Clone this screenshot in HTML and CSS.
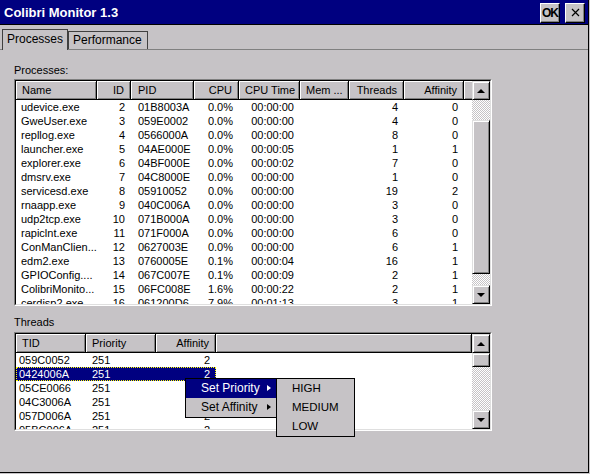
FILE: index.html
```html
<!DOCTYPE html>
<html>
	<head>
		<meta charset="UTF-8">
		<title>Colibri Monitor 1.3</title>
		<link rel="stylesheet" href="styles.css">
	</head>
	<body>
		<div class="window">
			<div class="titlebar">
				<span class="title">Colibri Monitor 1.3</span>
				<div class="tb_buttons">
					<span class="tb_btn">OK</span>
					<span class="tb_btn">
						<svg width="9" height="9" viewBox="0 0 9 9"><path d="M1 1L8 8M8 1L1 8" stroke="#000" stroke-width="1.2" fill="none"/></svg>
					</span>
				</div>
			</div>

			<div class="tabs">
				<div class="tab active">Processes</div>
				<div class="tab">Performance</div>
			</div>

			<div class="page">
				<div class="label">Processes:</div>
				<div class="lv proc">
					<div class="lv_in">
						<div class="lv_main">
							<div class="hd cols">
								<span>Name</span>
								<span class="r">ID</span>
								<span class="pid">PID</span>
								<span class="r">CPU</span>
								<span class="r">CPU Time</span>
								<span class="r">Mem ...</span>
								<span class="r">Threads</span>
								<span class="r">Affinity</span>
								<span></span>
							</div>
							<div class="row cols"><span>udevice.exe</span><span class="r">2</span><span class="pid">01B8003A</span><span class="r">0.0%</span><span class="r">00:00:00</span><span></span><span class="r">4</span><span class="r">0</span><span></span></div>
							<div class="row cols"><span>GweUser.exe</span><span class="r">3</span><span class="pid">059E0002</span><span class="r">0.0%</span><span class="r">00:00:00</span><span></span><span class="r">4</span><span class="r">0</span><span></span></div>
							<div class="row cols"><span>repllog.exe</span><span class="r">4</span><span class="pid">0566000A</span><span class="r">0.0%</span><span class="r">00:00:00</span><span></span><span class="r">8</span><span class="r">0</span><span></span></div>
							<div class="row cols"><span>launcher.exe</span><span class="r">5</span><span class="pid">04AE000E</span><span class="r">0.0%</span><span class="r">00:00:05</span><span></span><span class="r">1</span><span class="r">1</span><span></span></div>
							<div class="row cols"><span>explorer.exe</span><span class="r">6</span><span class="pid">04BF000E</span><span class="r">0.0%</span><span class="r">00:00:02</span><span></span><span class="r">7</span><span class="r">0</span><span></span></div>
							<div class="row cols"><span>dmsrv.exe</span><span class="r">7</span><span class="pid">04C8000E</span><span class="r">0.0%</span><span class="r">00:00:00</span><span></span><span class="r">1</span><span class="r">0</span><span></span></div>
							<div class="row cols"><span>servicesd.exe</span><span class="r">8</span><span class="pid">05910052</span><span class="r">0.0%</span><span class="r">00:00:00</span><span></span><span class="r">19</span><span class="r">2</span><span></span></div>
							<div class="row cols"><span>rnaapp.exe</span><span class="r">9</span><span class="pid">040C006A</span><span class="r">0.0%</span><span class="r">00:00:00</span><span></span><span class="r">3</span><span class="r">0</span><span></span></div>
							<div class="row cols"><span>udp2tcp.exe</span><span class="r">10</span><span class="pid">071B000A</span><span class="r">0.0%</span><span class="r">00:00:00</span><span></span><span class="r">3</span><span class="r">0</span><span></span></div>
							<div class="row cols"><span>rapiclnt.exe</span><span class="r">11</span><span class="pid">071F000A</span><span class="r">0.0%</span><span class="r">00:00:00</span><span></span><span class="r">6</span><span class="r">0</span><span></span></div>
							<div class="row cols"><span>ConManClien...</span><span class="r">12</span><span class="pid">0627003E</span><span class="r">0.0%</span><span class="r">00:00:00</span><span></span><span class="r">6</span><span class="r">1</span><span></span></div>
							<div class="row cols"><span>edm2.exe</span><span class="r">13</span><span class="pid">0760005E</span><span class="r">0.1%</span><span class="r">00:00:04</span><span></span><span class="r">16</span><span class="r">1</span><span></span></div>
							<div class="row cols"><span>GPIOConfig....</span><span class="r">14</span><span class="pid">067C007E</span><span class="r">0.1%</span><span class="r">00:00:09</span><span></span><span class="r">2</span><span class="r">1</span><span></span></div>
							<div class="row cols"><span>ColibriMonito...</span><span class="r">15</span><span class="pid">06FC008E</span><span class="r">1.6%</span><span class="r">00:00:22</span><span></span><span class="r">2</span><span class="r">1</span><span></span></div>
							<div class="row cols"><span>cerdisp2.exe</span><span class="r">16</span><span class="pid">061200D6</span><span class="r">7.9%</span><span class="r">00:01:13</span><span></span><span class="r">3</span><span class="r">1</span><span></span></div>
						</div>
						<div class="vscroll">
							<div class="sb_btn"><i class="arr_up"></i></div>
							<div class="thumb proc_thumb"></div>
							<div class="sb_space"></div>
							<div class="sb_btn"><i class="arr_down"></i></div>
						</div>
					</div>
				</div>

				<div class="label threads_label">Threads</div>
				<div class="lv threads">
					<div class="lv_in">
						<div class="lv_main">
							<div class="hd tcols">
								<span>TID</span>
								<span>Priority</span>
								<span class="r">Affinity</span>
								<span></span>
							</div>
							<div class="trow"><div class="tcells"><span class="first">059C0052</span><span>251</span><span class="r">2</span></div></div>
							<div class="trow"><div class="tcells selected"><span class="first">0424006A</span><span>251</span><span class="r">2</span></div></div>
							<div class="trow"><div class="tcells"><span class="first">05CE0066</span><span>251</span><span class="r">2</span></div></div>
							<div class="trow"><div class="tcells"><span class="first">04C3006A</span><span>251</span><span class="r">2</span></div></div>
							<div class="trow"><div class="tcells"><span class="first">057D006A</span><span>251</span><span class="r">2</span></div></div>
							<div class="trow"><div class="tcells"><span class="first">05BC006A</span><span>251</span><span class="r">2</span></div></div>
						</div>
						<div class="vscroll">
							<div class="sb_btn"><i class="arr_up"></i></div>
							<div class="thumb thr_thumb"></div>
							<div class="sb_space"></div>
							<div class="sb_btn"><i class="arr_down"></i></div>
						</div>
					</div>
				</div>
			</div>

			<div class="menu ctx">
				<div class="item hot">Set Priority<i class="arr_right"></i></div>
				<div class="item">Set Affinity<i class="arr_right"></i></div>
			</div>
			<div class="menu sub">
				<div class="item">HIGH</div>
				<div class="item">MEDIUM</div>
				<div class="item">LOW</div>
			</div>
		</div>
	</body>
</html>
```

FILE: styles.css
```css
* {
	margin: 0;
	padding: 0;
	box-sizing: border-box;
}
body {
	width: 590px;
	height: 474px;
	overflow: hidden;
	background-color: #c6c3c6;
	font-family: "Liberation Sans", Arial, sans-serif;
	font-size: 11px;
	color: #000;
}

.window {
	position: relative;
	width: 589px;
	height: 473px;
	border-right: 1px solid #000;
	border-bottom: 1px solid #000;
	background-color: #c6c3c6;
}

/* title bar */
.titlebar {
	height: 25px;
	background-color: #000080;
	border-bottom: 1px solid #000;
	display: flex;
	align-items: center;
	justify-content: space-between;
	padding: 0 3px 0 4px;
}
.title {
	color: #fff;
	font-weight: bold;
	font-size: 13px;
}
.tb_buttons {
	display: flex;
	gap: 5px;
	margin-top: 1px;
}
.tb_btn {
	width: 20px;
	height: 20px;
	background-color: #c6c3c6;
	border: 1px solid;
	border-color: #fff #000 #000 #fff;
	box-shadow: inset -1px -1px #808080;
	display: flex;
	align-items: center;
	justify-content: center;
	font-weight: bold;
	font-size: 12px;
	letter-spacing: -1px;
}

/* tabs */
.tabs {
	height: 25px;
	display: flex;
	align-items: flex-end;
	padding-left: 2px;
	border-bottom: 1px solid #808080;
}
.tab {
	height: 18px;
	width: 80px;
	border: 1px solid #404040;
	border-bottom: none;
	font-size: 12px;
	line-height: 16px;
	padding-left: 4px;
	margin-bottom: 0;
}
.tab.active {
	width: 66px;
	height: 21px;
	margin-bottom: -1px;
	background-color: #c6c3c6;
	padding-left: 4px;
	line-height: 18px;
	position: relative;
	z-index: 1;
}

/* page */
.page {
	padding-left: 14px;
}
.label {
	height: 14px;
	line-height: 14px;
	margin-top: 13px;
	margin-bottom: 2px;
}
.threads_label {
	margin-top: 9px;
	margin-bottom: 3px;
}

.lv {
	width: 478px;
	border: 1px solid;
	border-color: #808080 #fff #fff #808080;
}
.lv.proc {
	height: 227px;
}
.lv.threads {
	height: 99px;
}
.lv_in {
	height: 100%;
	display: flex;
	background-color: #fff;
	border: 1px solid;
	border-color: #000 #dfdfdf #dfdfdf #000;
}
.lv_main {
	width: 456px;
	overflow: hidden;
}

.cols {
	display: grid;
	grid-template-columns: 81px 34px 63px 45px 61px 49px 55px 60px 8px;
}
.tcols {
	display: grid;
	grid-template-columns: 70px 70px 60px 256px;
}

.hd {
	height: 19px;
}
.hd span {
	background-color: #c6c3c6;
	border-right: 1px solid #000;
	border-bottom: 1px solid #000;
	box-shadow: inset 1px 1px #fff, inset -1px -1px #808080;
	line-height: 18px;
	padding: 0 6px;
	white-space: nowrap;
	overflow: hidden;
}

.row span,
.tcells span {
	height: 14px;
	line-height: 14px;
	padding: 0 6px;
	white-space: nowrap;
	overflow: hidden;
}
.row span:first-child {
	padding-left: 5px;
}
.r {
	text-align: right;
}
.pid {
	padding-left: 7px !important;
}

.trow {
	height: 14px;
}
.tcells {
	width: 200px;
	display: grid;
	grid-template-columns: 70px 70px 60px;
}
.tcells .first {
	padding-left: 3px;
}
.tcells.selected {
	background-color: #000080;
	color: #fff;
	outline: 1px dotted #ffff00;
	outline-offset: -1px;
}

/* scroll bars */
.vscroll {
	width: 18px;
	display: flex;
	flex-direction: column;
	background: repeating-conic-gradient(#c6c3c6 0 25%, #fff 0 50%) 0 0 / 2px 2px;
}
.sb_btn,
.thumb {
	flex: none;
	background-color: #c6c3c6;
	border: 1px solid;
	border-color: #dfdfdf #000 #000 #dfdfdf;
	box-shadow: inset 1px 1px #fff, inset -1px -1px #808080;
}
.sb_btn {
	height: 19px;
	display: flex;
	align-items: center;
	justify-content: center;
}
.proc_thumb {
	height: 154px;
	margin-top: 20px;
}
.thr_thumb {
	height: 14px;
}
.sb_space {
	flex: 1;
}
.arr_up {
	width: 0;
	height: 0;
	border-left: 4px solid transparent;
	border-right: 4px solid transparent;
	border-bottom: 4px solid #000;
}
.arr_down {
	width: 0;
	height: 0;
	border-left: 4px solid transparent;
	border-right: 4px solid transparent;
	border-top: 4px solid #000;
}

/* popup menus */
.menu {
	position: absolute;
	background-color: #c6c3c6;
	border: 1px solid #000;
	z-index: 5;
}
.ctx {
	left: 185px;
	top: 378px;
	width: 92px;
	height: 40px;
	font-size: 12px;
}
.sub {
	left: 276px;
	top: 378px;
	width: 79px;
	height: 59px;
	font-size: 11.5px;
}
.item {
	height: 19px;
	line-height: 19px;
	padding-left: 15px;
	position: relative;
}
.item.hot {
	background-color: #000080;
	color: #fff;
}
.arr_right {
	position: absolute;
	right: 5px;
	top: 6px;
	width: 0;
	height: 0;
	border-top: 3.5px solid transparent;
	border-bottom: 3.5px solid transparent;
	border-left: 4px solid #000;
}
.hot .arr_right {
	border-left-color: #fff;
}
```
